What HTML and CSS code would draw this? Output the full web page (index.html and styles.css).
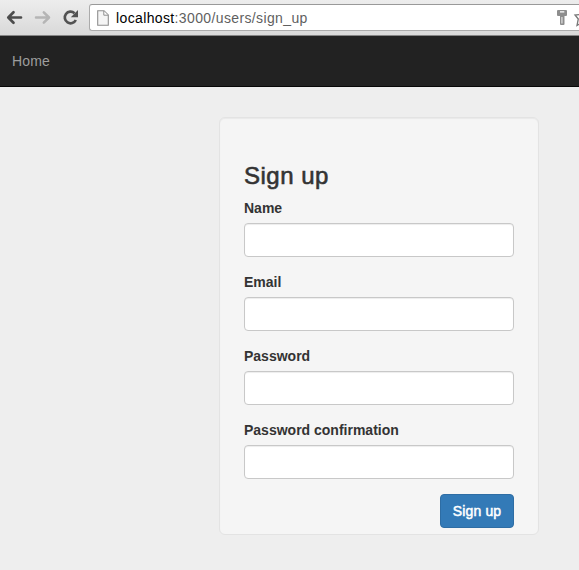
FILE: index.html
```html
<!DOCTYPE html>
<html lang="en">
<head>
<meta charset="utf-8">
<title>Sign up</title>
<link rel="stylesheet" href="styles.css">
</head>
<body>
<header class="toolbar">
  <svg class="nav-icons" width="89" height="35" viewBox="0 0 89 35" fill="none">
    <path d="M21 17.5H9M13.5 12.3L8.3 17.5L13.5 22.7" stroke="#4c4c4c" stroke-width="2.7" stroke-linecap="round" stroke-linejoin="round"/>
    <path d="M36 17.5H48M43.8 12.3L49 17.5L43.8 22.7" stroke="#b5b5b5" stroke-width="2.5" stroke-linecap="round" stroke-linejoin="round"/>
    <path d="M74.5 13.2A5.8 5.8 0 1 0 75.8 20" stroke="#525252" stroke-width="2.7"/>
    <path d="M78 10V17.2H70.8Z" fill="#525252"/>
  </svg>
  <div class="address">
    <svg class="page-icon" width="12" height="16" viewBox="0 0 12 16">
      <path d="M.7 .8H7L11.3 5V15.2H.7Z" fill="#f5f5f5" stroke="#8f8f8f" stroke-width="1.1"/>
      <path d="M6.8 1V5.2H11.2" fill="#fff" stroke="#8f8f8f"/>
    </svg>
    <span class="url"><span class="host">localhost</span>:3000/users/sign_up</span>
    <svg class="end-icons" width="23" height="26" viewBox="0 0 23 26">
      <path fill="#8d8d8d" fill-rule="evenodd" d="M2 5H10Q11 5 11 6V10Q11 11 10 11H8.5V19Q8.5 20 7.5 20H5Q4 20 4 19V11H2Q1 11 1 10V6Q1 5 2 5ZM4 6.2V7.4H8.3V6.2ZM5.5 12V18.5H6.4V12Z"/>
      <path d="M26 4.500L24 9.5L19 10L22.3 14L21 20.500L27 17" fill="#fff" stroke="#777" stroke-width="1.3"/>
    </svg>
  </div>
</header>
<nav class="navbar"><a class="nav-link">Home</a></nav>
<main>
  <form class="well">
    <h2>Sign up</h2>
    <div class="group"><label for="name">Name</label><input id="name" type="text"></div>
    <div class="group"><label for="email">Email</label><input id="email" type="email"></div>
    <div class="group"><label for="password">Password</label><input id="password" type="password"></div>
    <div class="group"><label for="confirm">Password confirmation</label><input id="confirm" type="password"></div>
    <div class="actions"><button type="button">Sign up</button></div>
  </form>
</main>
</body>
</html>
```
FILE: styles.css
```css
* { box-sizing: border-box; }
body {
  margin: 0;
  height: 570px;
  overflow: hidden;
  background: #eee;
  color: #333;
  font: 14px/20px "Liberation Sans", Arial, sans-serif;
}
.toolbar {
  display: flex;
  height: 36px;
  background: linear-gradient(#ededed, #d9d9d9);
  border-bottom: 1px solid #858585;
}
.nav-icons { flex: none; }
.address {
  flex: 1;
  display: flex;
  align-items: center;
  height: 27px;
  margin-top: 4px;
  padding-left: 7px;
  background: #fff;
  border: 1px solid #ababab;
  border-top-color: #999;
  border-right: 0;
  border-radius: 3px 0 0 3px;
}
.url { margin-left: 7px; color: #5f5f5f; font-size: 14px; letter-spacing: .37px; }
.host { color: #000; }
.end-icons { margin-left: auto; }
.navbar {
  display: flex;
  align-items: center;
  height: 51px;
  padding-left: 12px;
  background: #222;
  border-bottom: 1px solid #080808;
}
.nav-link { color: #9d9d9d; letter-spacing: .15px; }
.well {
  width: 320px;
  height: 418px;
  margin: 30px 0 0 219px;
  padding: 44px 24px 0;
  background: #f5f5f5;
  border: 1px solid #e3e3e3;
  border-radius: 6px;
  box-shadow: inset 0 1px 1px rgba(0, 0, 0, .05);
}
h2 {
  margin: 0 0 9px;
  font-size: 24px;
  line-height: 27px;
  font-weight: 400;
  letter-spacing: .5px;
  -webkit-text-stroke: .6px #333;
}
.group { margin-bottom: 15px; }
label { display: block; margin-bottom: 5px; font-weight: 700; }
input {
  display: block;
  width: 100%;
  height: 34px;
  padding: 6px 12px;
  background: #fff;
  border: 1px solid #c8c8c8;
  border-radius: 4px;
  box-shadow: inset 0 1px 1px rgba(0, 0, 0, .075);
}
.actions { display: flex; justify-content: flex-end; }
button {
  width: 74px;
  height: 34px;
  padding: 0;
  color: #fff;
  background: #337ab7;
  border: 1px solid #2e6da4;
  border-radius: 4px;
  font: inherit;
  letter-spacing: .15px;
  -webkit-text-stroke: .5px #fff;
}
```
